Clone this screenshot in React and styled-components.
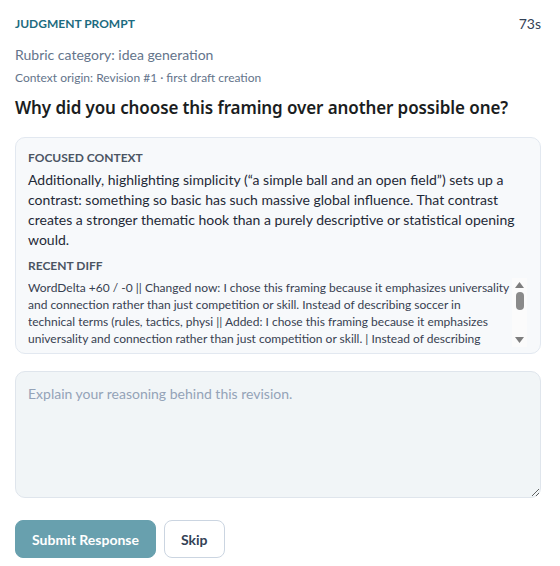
import React from "react";
import styled, { createGlobalStyle } from "styled-components";

const GlobalStyle = createGlobalStyle`
  * { box-sizing: border-box; }
  body {
    margin: 0;
    background: #ffffff;
    font-family: Lato, "Noto Sans", sans-serif;
  }
`;

const Panel = styled.div`
  width: 560px;
  padding: 11px 19px 0 15px;
  display: flex;
  flex-direction: column;
`;

const TopRow = styled.div`
  display: flex;
  justify-content: space-between;
  align-items: center;
  height: 24px;
`;

const Eyebrow = styled.div`
  font-size: 12px;
  font-weight: 700;
  color: #1d6b80;
  text-transform: uppercase;
`;

const Timer = styled.div`
  font-size: 14px;
  color: #334155;
`;

const Rubric = styled.div`
  margin-top: 10px;
  font-size: 14px;
  color: #64748b;
  line-height: 20px;
`;

const Origin = styled.div`
  margin-top: 4px;
  font-size: 12px;
  color: #64748b;
  line-height: 18px;
`;

const Question = styled.h2`
  margin: 9px 0 0;
  font-family: "Noto Sans", sans-serif;
  font-size: 17px;
  font-weight: 600;
  letter-spacing: -0.1px;
  color: #1a1d21;
  line-height: 24px;
`;

const Card = styled.div`
  margin-top: 17px;
  background: #f7f9fb;
  border: 1px solid #e2e8f0;
  border-radius: 10px;
  padding: 11px 13px 6px 12px;
`;

const SectionLabel = styled.div`
  font-size: 12px;
  font-weight: 700;
  color: #4b5563;
  text-transform: uppercase;
  line-height: 18px;
  margin-top: ${(p) => (p.$spaced ? "7px" : "0")};
`;

const ContextText = styled.p`
  margin: 3px 0 0;
  font-size: 14px;
  line-height: 20px;
  color: #1f2937;
`;

const DiffRow = styled.div`
  margin-top: 3px;
  display: flex;
  height: 69px;
`;

const DiffText = styled.div`
  flex: 1;
  overflow: hidden;
  padding-top: 1px;
  font-size: 12px;
  line-height: 17px;
  color: #374151;
`;

const DiffLine = styled.div`
  white-space: nowrap;
`;

const Scrollbar = styled.div`
  width: 15px;
  flex-shrink: 0;
  background: #fbfbfb;
  display: flex;
  flex-direction: column;
  align-items: center;
  padding: 4px 0;
`;

const Thumb = styled.div`
  width: 8px;
  height: 18px;
  border-radius: 4px;
  background: #8a8a8a;
  margin-top: 4px;
  margin-bottom: auto;
`;

const Arrow = ({ down }) => (
  <svg width="9" height="6" viewBox="0 0 9 6">
    <path d={down ? "M0 0 H9 L4.5 6 Z" : "M0 6 H9 L4.5 0 Z"} fill="#7d7d7d" />
  </svg>
);

const Reply = styled.textarea`
  display: block;
  margin-top: 17px;
  height: 127px;
  width: 100%;
  resize: vertical;
  background: #f1f5f7;
  border: 1px solid #dfe5ec;
  border-radius: 10px;
  padding: 12px 12px;
  font-family: inherit;
  font-size: 14px;
  line-height: 20px;
  color: #1f2937;
  outline: none;
  &::placeholder {
    color: #94a3b8;
  }
`;

const Actions = styled.div`
  display: flex;
  gap: 8px;
  margin-top: 22px;
`;

const Button = styled.button`
  height: 38px;
  padding: 0 16px;
  border-radius: 8px;
  font-family: inherit;
  font-size: 14px;
  font-weight: 700;
  cursor: pointer;
  border: 1px solid ${(p) => (p.$primary ? "#68a0ae" : "#cbd5e1")};
  background: ${(p) => (p.$primary ? "#68a0ae" : "#ffffff")};
  color: ${(p) => (p.$primary ? "#ffffff" : "#334155")};
`;

const diffLines = [
  "WordDelta +60 / -0 || Changed now: I chose this framing because it emphasizes universality",
  "and connection rather than just competition or skill. Instead of describing soccer in",
  "technical terms (rules, tactics, physi || Added: I chose this framing because it emphasizes",
  "universality and connection rather than just competition or skill. | Instead of describing",
];

export default function App() {
  return (
    <>
      <GlobalStyle />
      <Panel>
        <TopRow>
          <Eyebrow>Judgment prompt</Eyebrow>
          <Timer>73s</Timer>
        </TopRow>
        <Rubric>Rubric category: idea generation</Rubric>
        <Origin>Context origin: Revision #1 · first draft creation</Origin>
        <Question>Why did you choose this framing over another possible one?</Question>
        <Card>
          <SectionLabel>Focused context</SectionLabel>
          <ContextText>
            Additionally, highlighting simplicity (“a simple ball and an open field”) sets up a
            contrast: something so basic has such massive global influence. That contrast
            creates a stronger thematic hook than a purely descriptive or statistical opening
            would.
          </ContextText>
          <SectionLabel $spaced>Recent diff</SectionLabel>
          <DiffRow>
            <DiffText>
              {diffLines.map((line, i) => (
                <DiffLine key={i}>{line}</DiffLine>
              ))}
            </DiffText>
            <Scrollbar>
              <Arrow />
              <Thumb />
              <Arrow down />
            </Scrollbar>
          </DiffRow>
        </Card>
        <Reply placeholder="Explain your reasoning behind this revision." />
        <Actions>
          <Button $primary>Submit Response</Button>
          <Button>Skip</Button>
        </Actions>
      </Panel>
    </>
  );
}
